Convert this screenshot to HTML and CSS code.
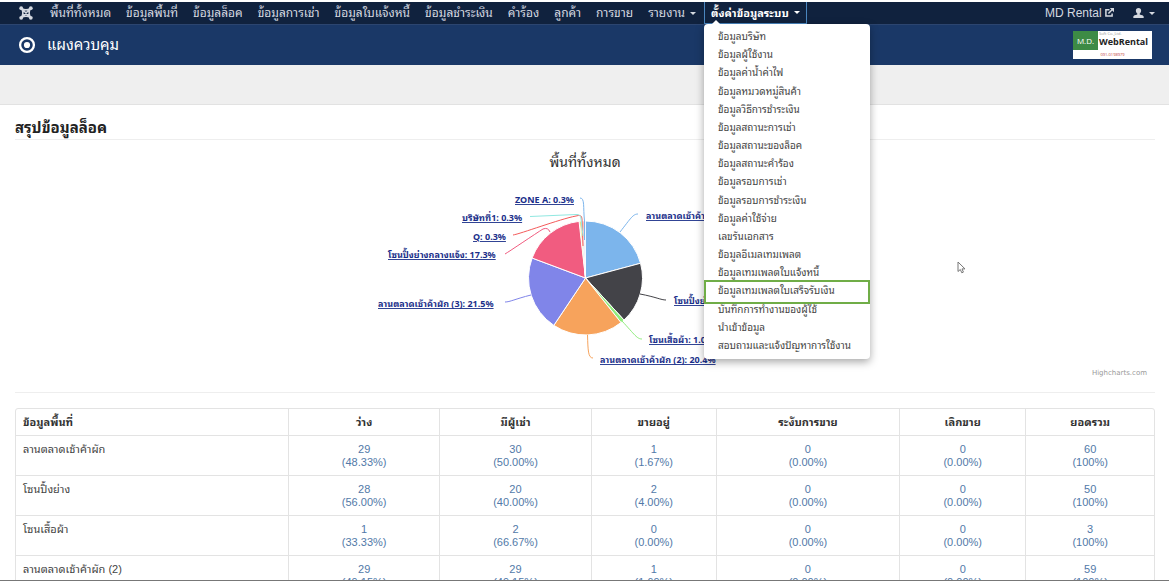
FILE: index.html
```html
<!DOCTYPE html>
<html lang="th">
<head>
<meta charset="utf-8">
<title>แผงควบคุม</title>
<link rel="stylesheet" href="styles.css">
</head>
<body>
<nav class="navbar">
  <a class="brand" href="#" aria-label="Joomla">
    <svg width="14" height="14" viewBox="0 0 14 14" fill="none" stroke="#d5d9e0" stroke-width="1.6">
      <path d="M2.400 2.400Q7 5.400 11.600 2.400M2.400 11.600Q7 8.600 11.600 11.600M2.400 2.400Q5.400 7 2.400 11.600M11.600 2.400Q8.600 7 11.600 11.600M4 4L10 10M10 4L4 10"/>
      <g fill="#d5d9e0" stroke="none"><circle cx="2.200" cy="2.200" r="1.900"/><circle cx="11.800" cy="2.200" r="1.900"/><circle cx="2.200" cy="11.800" r="1.900"/><circle cx="11.800" cy="11.800" r="1.900"/></g>
    </svg>
  </a>
  <ul class="menu">
    <li><a href="#">พื้นที่ทั้งหมด</a></li>
    <li><a href="#">ข้อมูลพื้นที่</a></li>
    <li><a href="#">ข้อมูลล็อค</a></li>
    <li><a href="#">ข้อมูลการเช่า</a></li>
    <li><a href="#">ข้อมูลใบแจ้งหนี้</a></li>
    <li><a href="#">ข้อมูลชำระเงิน</a></li>
    <li><a href="#">คำร้อง</a></li>
    <li><a href="#">ลูกค้า</a></li>
    <li><a href="#">การขาย</a></li>
    <li><a href="#">รายงาน<span class="caret"></span></a></li>
    <li class="open"><a href="#">ตั้งค่าข้อมูลระบบ<span class="caret"></span></a>
      <ul class="dropdown">
        <li><a href="#">ข้อมูลบริษัท</a></li>
        <li><a href="#">ข้อมูลผู้ใช้งาน</a></li>
        <li><a href="#">ข้อมูลค่าน้ำค่าไฟ</a></li>
        <li><a href="#">ข้อมูลหมวดหมู่สินค้า</a></li>
        <li><a href="#">ข้อมูลวิธีการชำระเงิน</a></li>
        <li><a href="#">ข้อมูลสถานะการเช่า</a></li>
        <li><a href="#">ข้อมูลสถานะของล็อค</a></li>
        <li><a href="#">ข้อมูลสถานะคำร้อง</a></li>
        <li><a href="#">ข้อมูลรอบการเช่า</a></li>
        <li><a href="#">ข้อมูลรอบการชำระเงิน</a></li>
        <li><a href="#">ข้อมูลค่าใช้จ่าย</a></li>
        <li><a href="#">เลขรันเอกสาร</a></li>
        <li><a href="#">ข้อมูลอีเมลเทมเพลต</a></li>
        <li><a href="#">ข้อมูลเทมเพลตใบแจ้งหนี้</a></li>
        <li class="marked"><a href="#">ข้อมูลเทมเพลตใบเสร็จรับเงิน</a></li>
        <li><a href="#">บันทึกการทำงานของผู้ใช้</a></li>
        <li><a href="#">นำเข้าข้อมูล</a></li>
        <li><a href="#">สอบถามและแจ้งปัญหาการใช้งาน</a></li>
      </ul>
    </li>
  </ul>
  <div class="account">
    <a class="site" href="#">MD Rental
      <svg width="9" height="9" viewBox="0 0 9 9" fill="none" stroke="#d5d9e0" stroke-width="1.500"><path d="M4.500 1.700H.9v6.300h6.200V5.500M3.400 5.600L7.600 1.300"/><path d="M4.800 0H9v4.200z" fill="#d5d9e0" stroke="none"/></svg>
    </a>
    <a class="user" href="#" aria-label="User">
      <svg width="11" height="10" viewBox="0 0 10 10" preserveAspectRatio="none" fill="#d5d9e0"><path d="M5 0c1.600 0 2.400 1.100 2.400 2.600 0 1.300-.5 2.400-1.300 2.900v.9c1.800.5 3.600 1 3.600 2.200V10H.3V8.600c0-1.200 1.800-1.700 3.600-2.200v-.9C3.100 5 2.600 3.900 2.600 2.600 2.600 1.100 3.400 0 5 0z"/></svg>
      <span class="caret"></span>
    </a>
  </div>
</nav>
<header class="header">
  <svg width="18" height="18" viewBox="0 0 18 18"><circle cx="9" cy="9" r="6.900" fill="none" stroke="#fff" stroke-width="2.300"/><circle cx="9" cy="9" r="3.100" fill="#fff"/></svg>
  <h1>แผงควบคุม</h1>
  <div class="logo">
    <span class="logo-mark">M.D.</span>
    <span class="logo-name"><small>Soft Co.,Ltd.</small>WebRental</span>
    <span class="logo-phone">091-0198979</span>
  </div>
</header>
<div class="subhead"></div>
<main class="content">
  <h2>สรุปข้อมูลล็อค</h2>
  <section class="chart">
    <h3>พื้นที่ทั้งหมด</h3>
    <svg class="pie" width="520" height="190" viewBox="325 180 520 190">
      <g stroke="#fff" stroke-width="1">
        <path fill="#7cb5ec" d="M585.500 278V221A57 57 0 0 1 640.560 263.250Z"/>
        <path fill="#434348" d="M585.500 278L640.560 263.250A57 57 0 0 1 624.010 320.020Z"/>
        <path fill="#90ed7d" d="M585.500 278L624.010 320.020A57 57 0 0 1 620.980 322.610Z"/>
        <path fill="#f7a35c" d="M585.500 278L620.980 322.610A57 57 0 0 1 553.800 325.370Z"/>
        <path fill="#8085e9" d="M585.500 278L553.800 325.370A57 57 0 0 1 532.110 258.040Z"/>
        <path fill="#f15c80" d="M585.500 278L532.110 258.040A57 57 0 0 1 579.050 221.370Z"/>
        <path fill="#e4d354" stroke-width=".8" d="M585.500 278L579.600 221.300A57 57 0 0 1 581.300 221.200Z"/>
        <path fill="#2b908f" stroke-width=".8" d="M585.500 278L581.300 221.200A57 57 0 0 1 582.600 221.100Z"/>
        <path fill="#f45b5b" stroke-width=".8" d="M585.500 278L582.600 221.100A57 57 0 0 1 584 221Z"/>
        <path fill="#7cb5ec" stroke-width=".8" d="M585.500 278L584 221A57 57 0 0 1 585.500 221Z"/>
      </g>
      <g fill="none" stroke-width="1">
        <path stroke="#7cb5ec" d="M638 214C633 214 631 218 620 232"/>
        <path stroke="#434348" d="M666 300C661 300 656 297 640 294"/>
        <path stroke="#90ed7d" d="M642 339C637 339 635 335 622 321"/>
        <path stroke="#f7a35c" d="M593 358C588 358 588 350 587.500 335"/>
        <path stroke="#8085e9" d="M505 302C510 302 515 299 531 295"/>
        <path stroke="#f15c80" d="M505 254C510 251 535 234 543 229Q548 227 550 232"/>
        <path stroke="#f45b5b" d="M513 235C520 234 560 219 576 216Q582 214 582 219L583 246"/>
        <path stroke="#91e8e1" d="M530 216.500L576 214.500Q581 214 581 219L583 236"/>
        <path stroke="#7cb5ec" d="M580 198C585 198 583 207 584.500 221V240"/>
      </g>
      <g class="labels">
        <a href="#"><text x="515" y="203">ZONE A: 0.3%</text></a>
        <a href="#"><text x="462" y="221">บริษัทที่1: 0.3%</text></a>
        <a href="#"><text x="473" y="240">Q: 0.3%</text></a>
        <a href="#"><text x="388" y="258">โซนปิ้งย่างกลางแจ้ง: 17.3%</text></a>
        <a href="#"><text x="378" y="307">ลานตลาดเช้าค้าผัก (3): 21.5%</text></a>
        <a href="#"><text x="646" y="219">ลานตลาดเช้าค้าผัก: 20.8%</text></a>
        <a href="#"><text x="674" y="304">โซนปิ้งย่าง: 17.3%</text></a>
        <a href="#"><text x="649" y="343">โซนเสื้อผ้า: 1.0%</text></a>
        <a href="#"><text x="600" y="363">ลานตลาดเช้าค้าผัก (2): 20.4%</text></a>
      </g>
    </svg>
    <a class="credits" href="#">Highcharts.com</a>
  </section>
  <table class="summary">
    <colgroup><col class="c-area"><col class="c-free"><col class="c-free"><col class="c-sell"><col class="c-hold"><col class="c-stop"><col class="c-total"></colgroup>
    <thead><tr><th>ข้อมูลพื้นที่</th><th>ว่าง</th><th>มีผู้เช่า</th><th>ขายอยู่</th><th>ระงับการขาย</th><th>เลิกขาย</th><th>ยอดรวม</th></tr></thead>
    <tbody>
      <tr><td>ลานตลาดเช้าค้าผัก</td><td><a href="#">29<br>(48.33%)</a></td><td><a href="#">30<br>(50.00%)</a></td><td><a href="#">1<br>(1.67%)</a></td><td><a href="#">0<br>(0.00%)</a></td><td><a href="#">0<br>(0.00%)</a></td><td><a href="#">60<br>(100%)</a></td></tr>
      <tr><td>โซนปิ้งย่าง</td><td><a href="#">28<br>(56.00%)</a></td><td><a href="#">20<br>(40.00%)</a></td><td><a href="#">2<br>(4.00%)</a></td><td><a href="#">0<br>(0.00%)</a></td><td><a href="#">0<br>(0.00%)</a></td><td><a href="#">50<br>(100%)</a></td></tr>
      <tr><td>โซนเสื้อผ้า</td><td><a href="#">1<br>(33.33%)</a></td><td><a href="#">2<br>(66.67%)</a></td><td><a href="#">0<br>(0.00%)</a></td><td><a href="#">0<br>(0.00%)</a></td><td><a href="#">0<br>(0.00%)</a></td><td><a href="#">3<br>(100%)</a></td></tr>
      <tr><td>ลานตลาดเช้าค้าผัก (2)</td><td><a href="#">29<br>(49.15%)</a></td><td><a href="#">29<br>(49.15%)</a></td><td><a href="#">1<br>(1.69%)</a></td><td><a href="#">0<br>(0.00%)</a></td><td><a href="#">0<br>(0.00%)</a></td><td><a href="#">59<br>(100%)</a></td></tr>
    </tbody>
  </table>
</main>
<svg class="pointer" width="9" height="13" viewBox="0 0 9 13"><path d="M1 1v9.500l2.300-2 1.500 3.300 1.600-.7L5 7.900h3z" fill="#fff" stroke="#777" stroke-width="1"/></svg>
</body>
</html>
```
FILE: styles.css
```css
* { box-sizing: border-box; }
body {
  margin: 0;
  height: 100vh;
  overflow: hidden;
  display: flex;
  flex-direction: column;
  padding-top: 2px;
  border-bottom: 1px solid #777;
  background: #fff;
  color: #444;
  font: 11px/14px "Liberation Sans", "Noto Sans Thai Looped", Loma, Waree, sans-serif;
}
a { color: inherit; text-decoration: none; }
ul { margin: 0; padding: 0; list-style: none; }
.navbar {
  flex: none;
  display: flex;
  height: 23px;
  padding: 0 14px 0 19px;
  background: #10223e;
  border-bottom: 1px solid #2c456f;
  color: #d5d9e0;
}
.brand { display: flex; align-items: center; width: 24px; }
.menu { display: flex; gap: 1px; font-size: 12px; line-height: 22px; white-space: nowrap; }
.menu > li > a { display: flex; align-items: center; height: 22px; padding: 0 7px; }
.menu > .open { position: relative; }
.menu > .open > a {
  border: 1px solid #4a86bf;
  border-top: 0;
  padding: 0 6px;
  color: #fff;
  font-size: 11px;
  font-weight: bold;
}
.caret {
  display: inline-block;
  margin-left: 5px;
  border: 3px solid transparent;
  border-top-color: currentColor;
  border-bottom: 0;
}
.dropdown {
  position: absolute;
  z-index: 5;
  top: 22px;
  left: 0;
  display: flex;
  flex-direction: column;
  justify-content: space-between;
  width: 166px;
  height: 335px;
  padding: 4px 14px;
  border-radius: 4px;
  background: #fff;
  box-shadow: 0 3px 8px rgba(0, 0, 0, .35);
  color: #444;
  font-size: 10px;
  line-height: 18px;
}
.dropdown::before {
  content: "";
  position: absolute;
  top: -4px;
  left: 8px;
  border: 4px solid transparent;
  border-bottom-color: #fff;
  border-top: 0;
}
.dropdown a { display: block; height: 18px; }
.marked { position: relative; }
.marked::after {
  content: "";
  position: absolute;
  inset: -2px -14px -4px;
  border: 2px solid #70ad47;
}
.account { display: flex; align-items: center; gap: 19px; margin-left: auto; font-size: 12px; }
.user { display: flex; align-items: center; }
.header {
  flex: none;
  display: flex;
  align-items: center;
  height: 40px;
  padding: 0 17px 0 18px;
  background: #1a3867;
  color: #fff;
}
.header h1 { margin: 0 auto 0 11px; font-size: 15px; line-height: 24px; font-weight: normal; }
.logo {
  display: grid;
  grid-template-columns: 25px 54px;
  grid-template-rows: 19px 9px;
  background: #fff;
  font-family: "Open Sans", "Liberation Sans", sans-serif;
}
.logo-mark { background: #3d8b45; color: #fff; font-size: 8px; line-height: 19px; text-align: center; }
.logo-name { padding-left: 1px; color: #222; font-size: 9px; line-height: 11px; font-weight: bold; }
.logo-name small { display: block; color: #999; font-size: 4px; line-height: 5px; font-weight: normal; }
.logo-phone { grid-column: 1 / 3; color: #b33; font-size: 4px; line-height: 9px; text-align: center; }
.subhead { flex: none; height: 40px; background: #efefef; border-bottom: 1px solid #e2e2e2; }
.content { padding: 11px 14px 0 15px; }
.content h2 {
  margin: 0;
  border-bottom: 1px solid #eee;
  color: #222;
  font-size: 15px;
  line-height: 23px;
}
.chart {
  display: flex;
  flex-direction: column;
  align-items: center;
  position: relative;
  padding: 10px 0 22px;
  margin-bottom: 15px;
  border-bottom: 1px solid #eee;
}
.chart h3 { margin: 0; color: #333; font-size: 14px; line-height: 24px; font-weight: normal; padding-bottom: 6px; }
.pie { display: block; }
.labels { fill: #1a2f8a; font: bold 9px "Noto Sans", "Noto Sans Thai Looped", Loma, Waree, sans-serif; text-decoration: underline; }
.credits {
  position: absolute;
  right: 8px;
  bottom: 12px;
  color: #999;
  font: 7px/14px "DejaVu Sans", sans-serif;
}
.summary {
  width: 100%;
  table-layout: fixed;
  border: 1px solid #e3e3e3;
  border-radius: 3px;
  border-spacing: 0;
  border-collapse: separate;
}
.c-area { width: 23.9%; }
.c-free { width: 13.3%; }
.c-sell { width: 11%; }
.c-hold { width: 16.1%; }
.c-stop { width: 11.1%; }
.c-total { width: 11.3%; }
.summary th, .summary td {
  padding: 7px 7px 6px;
  border-left: 1px solid #e3e3e3;
  line-height: 13px;
  text-align: center;
  vertical-align: top;
}
.summary th { color: #333; }
.summary td { border-top: 1px solid #e3e3e3; }
.summary th:first-child, .summary td:first-child { border-left: 0; text-align: left; }
.summary td a { color: #5279a8; }
.pointer { position: absolute; left: 957px; top: 261px; }
```
